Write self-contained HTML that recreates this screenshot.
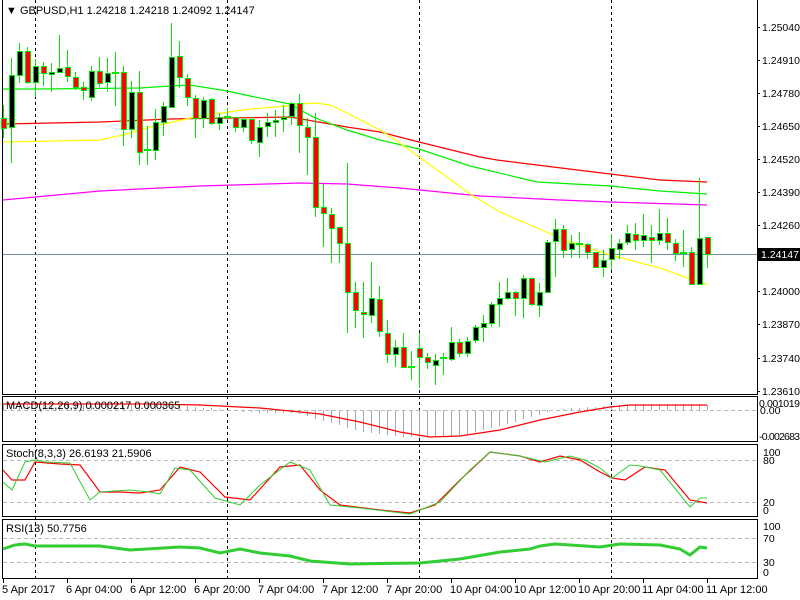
<!DOCTYPE html>
<html><head><meta charset="utf-8"><style>
html,body{margin:0;padding:0;background:#fff;width:800px;height:600px;overflow:hidden}
svg{display:block}
text{font-family:"Liberation Sans","DejaVu Sans",sans-serif;font-size:11px;fill:#000}
.ax text{font-size:10.5px}
</style></head><body>
<svg width="800" height="600" viewBox="0 0 800 600" xmlns="http://www.w3.org/2000/svg">
<rect width="800" height="600" fill="#fff"/>
<g fill="none" stroke="#000" stroke-width="1">
<rect x="2.5" y="-1" width="755" height="395.5"/>
<rect x="2.5" y="396.5" width="755" height="45"/>
<rect x="2.5" y="444.5" width="755" height="72"/>
<rect x="2.5" y="519.5" width="755" height="59"/>
</g>
<g stroke="#000" stroke-dasharray="3,3" stroke-width="1">
<line x1="35.5" y1="0" x2="35.5" y2="578"/>
<line x1="227.5" y1="0" x2="227.5" y2="578"/>
<line x1="419.5" y1="0" x2="419.5" y2="578"/>
<line x1="611.5" y1="0" x2="611.5" y2="578"/>
</g>
<g stroke="#b8b8b8" stroke-dasharray="4,3">
<line x1="3" y1="410.5" x2="757" y2="410.5"/>
<line x1="3" y1="460.5" x2="757" y2="460.5"/>
<line x1="3" y1="502.5" x2="757" y2="502.5"/>
<line x1="3" y1="538.5" x2="757" y2="538.5"/>
<line x1="3" y1="562.5" x2="757" y2="562.5"/>
</g>
<line x1="3" y1="254.5" x2="757" y2="254.5" stroke="#778899"/>
<g fill="none" stroke-width="1.2">
<polyline stroke="#ff00ff" points="3,200 100,191 200,186 300,183 347,184 400,188 480,196 560,200 610,202 707,205"/>
<polyline stroke="#ff0000" points="3,124 100,122 170,119 230,118 290,117 347,127 380,132 419,142 480,157 497,160 537,165 610,174 660,180 707,182"/>
<polyline stroke="#00ee00" points="3,89 40,89 140,88 170,86 190,85 227,91 250,96 290,104 313,117 347,130 380,140 419,149 470,166 537,182 610,186 660,191 707,194"/>
<polyline stroke="#ffff00" points="3,142 100,140 123,135 150,127 200,116 250,109 287,106 300,104 315,103 330,105 347,113 380,130 400,143 419,157 447,177 470,194 500,212 537,228 570,242 610,255 660,268 707,285"/>
</g>
<g stroke="#00e600" stroke-width="1">
<path d="M3.5 105V138M11.5 58V163M19.5 43V83M27.5 47V84M35.5 59V97M43.5 62V86M51.5 63V92M59.5 35V73M67.5 50V82M75.5 72V90M83.5 82V100M91.5 66V101M99.5 57V87M107.5 58V92M115.5 52V106M123.5 66V146M131.5 81V138M139.5 71V165M147.5 126V165M155.5 109V160M163.5 102V136M171.5 23V108M179.5 41V88M187.5 74V106M195.5 95V138M203.5 97V128M211.5 98V125M219.5 113V130M227.5 108V120M235.5 117V132M243.5 117V132M251.5 117V144M259.5 120V157M267.5 113V137M275.5 110V137M283.5 105V132M291.5 102V125M299.5 94V153M307.5 118V175M315.5 113V217M323.5 184V247M331.5 208V263M339.5 227V263M347.5 163V333M355.5 282V328M363.5 282V338M371.5 262V323M379.5 286V337M387.5 320V363M395.5 340V367M403.5 333V368M411.5 351V380M419.5 333V388M427.5 353V369M435.5 354V385M443.5 353V375M451.5 327V361M459.5 339V357M467.5 337V357M475.5 325V343M483.5 315V342M491.5 302V327M499.5 282V327M507.5 278V300M515.5 291V316M523.5 275V318M531.5 278V306M539.5 283V317M547.5 240V293M555.5 219V277M563.5 225V258M571.5 235V258M579.5 232V258M587.5 243V259M595.5 252V268M603.5 250V277M611.5 234V270M619.5 239V259M627.5 225V245M635.5 223V250M643.5 214V247M651.5 225V263M659.5 209V245M667.5 218V250M675.5 239V261M683.5 230V267M691.5 247V284M699.5 178V284M707.5 237V268"/>
<g fill="#ff0000">
<rect x="1.5" y="118.5" width="5" height="10"/><rect x="25.5" y="51.5" width="5" height="31"/><rect x="41.5" y="66.5" width="5" height="7"/><rect x="65.5" y="67.5" width="5" height="9"/><rect x="73.5" y="77.5" width="5" height="10"/><rect x="81.5" y="87.5" width="5" height="3"/><rect x="97.5" y="71.5" width="5" height="12"/><rect x="121.5" y="72.5" width="5" height="57"/><rect x="137.5" y="92.5" width="5" height="60"/><rect x="177.5" y="56.5" width="5" height="21"/><rect x="185.5" y="78.5" width="5" height="19"/><rect x="193.5" y="98.5" width="5" height="20"/><rect x="209.5" y="99.5" width="5" height="24"/><rect x="233.5" y="117.5" width="5" height="10"/><rect x="249.5" y="119.5" width="5" height="21"/><rect x="297.5" y="103.5" width="5" height="22"/><rect x="305.5" y="127.5" width="5" height="10"/><rect x="313.5" y="137.5" width="5" height="70"/><rect x="321.5" y="207.5" width="5" height="6"/><rect x="329.5" y="214.5" width="5" height="14"/><rect x="337.5" y="227.5" width="5" height="16"/><rect x="345.5" y="243.5" width="5" height="49"/><rect x="353.5" y="292.5" width="5" height="18"/><rect x="361.5" y="312.5" width="5" height="2"/><rect x="377.5" y="299.5" width="5" height="32"/><rect x="385.5" y="333.5" width="5" height="21"/><rect x="401.5" y="347.5" width="5" height="20"/><rect x="417.5" y="348.5" width="5" height="9"/><rect x="425.5" y="357.5" width="5" height="5"/><rect x="457.5" y="342.5" width="5" height="11"/><rect x="513.5" y="292.5" width="5" height="6"/><rect x="529.5" y="278.5" width="5" height="26"/><rect x="561.5" y="229.5" width="5" height="21"/><rect x="585.5" y="244.5" width="5" height="8"/><rect x="593.5" y="252.5" width="5" height="15"/><rect x="633.5" y="234.5" width="5" height="6"/><rect x="649.5" y="237.5" width="5" height="3"/><rect x="665.5" y="233.5" width="5" height="9"/><rect x="673.5" y="243.5" width="5" height="10"/><rect x="689.5" y="252.5" width="5" height="32"/><rect x="705.5" y="237.5" width="5" height="17"/>
</g>
<g fill="#000">
<rect x="9.5" y="75.5" width="5" height="52"/><rect x="17.5" y="51.5" width="5" height="24"/><rect x="33.5" y="66.5" width="5" height="16"/><rect x="49.5" y="72.5" width="5" height="2"/><rect x="57.5" y="68.5" width="5" height="4"/><rect x="89.5" y="71.5" width="5" height="26"/><rect x="105.5" y="73.5" width="5" height="9"/><rect x="129.5" y="92.5" width="5" height="37"/><rect x="153.5" y="122.5" width="5" height="28"/><rect x="161.5" y="106.5" width="5" height="16"/><rect x="169.5" y="57.5" width="5" height="50"/><rect x="201.5" y="100.5" width="5" height="18"/><rect x="217.5" y="117.5" width="5" height="6"/><rect x="241.5" y="119.5" width="5" height="8"/><rect x="257.5" y="127.5" width="5" height="15"/><rect x="265.5" y="122.5" width="5" height="4"/><rect x="273.5" y="120.5" width="5" height="2"/><rect x="281.5" y="117.5" width="5" height="2"/><rect x="289.5" y="103.5" width="5" height="13"/><rect x="369.5" y="298.5" width="5" height="17"/><rect x="393.5" y="347.5" width="5" height="7"/><rect x="433.5" y="360.5" width="5" height="5"/><rect x="449.5" y="342.5" width="5" height="17"/><rect x="465.5" y="341.5" width="5" height="12"/><rect x="473.5" y="327.5" width="5" height="13"/><rect x="481.5" y="323.5" width="5" height="4"/><rect x="489.5" y="304.5" width="5" height="19"/><rect x="497.5" y="298.5" width="5" height="6"/><rect x="505.5" y="292.5" width="5" height="6"/><rect x="521.5" y="278.5" width="5" height="20"/><rect x="537.5" y="292.5" width="5" height="13"/><rect x="545.5" y="242.5" width="5" height="50"/><rect x="553.5" y="229.5" width="5" height="12"/><rect x="569.5" y="243.5" width="5" height="6"/><rect x="601.5" y="260.5" width="5" height="7"/><rect x="609.5" y="248.5" width="5" height="11"/><rect x="617.5" y="243.5" width="5" height="6"/><rect x="625.5" y="233.5" width="5" height="9"/><rect x="641.5" y="235.5" width="5" height="5"/><rect x="657.5" y="233.5" width="5" height="7"/><rect x="697.5" y="238.5" width="5" height="46"/>
</g>
<path stroke-width="2" d="M112 73H119M144 150H151M224 117H231M408 367H415M440 358H447M576 244H583M680 253H687"/>
</g>
<path stroke="#a8a8a8" stroke-width="1" d="M3.5 410V405M11.5 410V405M19.5 410V405M27.5 410V405M35.5 410V405M43.5 410V405M51.5 410V405M59.5 410V405M67.5 410V405M75.5 410V405M83.5 410V405M91.5 410V405M99.5 410V405M107.5 410V405M115.5 410V405M123.5 410V405M131.5 410V405M139.5 410V405M147.5 410V405M155.5 410V405M163.5 410V405M171.5 410V405M179.5 410V405M187.5 410V406M195.5 410V407M203.5 410V408M211.5 410V408M219.5 410V409M235.5 410V411M243.5 410V412M251.5 410V412M259.5 410V413M267.5 410V413M275.5 410V413M283.5 410V413M291.5 410V413M299.5 410V414M307.5 410V416M315.5 410V419M323.5 410V421M331.5 410V423M339.5 410V425M347.5 410V428M355.5 410V430M363.5 410V432M371.5 410V433M379.5 410V434M387.5 410V435M395.5 410V436M403.5 410V437M411.5 410V437M419.5 410V437M427.5 410V437M435.5 410V437M443.5 410V437M451.5 410V436M459.5 410V435M467.5 410V434M475.5 410V432M483.5 410V430M491.5 410V428M499.5 410V426M507.5 410V424M515.5 410V422M523.5 410V419M531.5 410V417M539.5 410V415M547.5 410V412M563.5 410V409M571.5 410V408M579.5 410V408M587.5 410V407M595.5 410V407M603.5 410V406M611.5 410V406M619.5 410V405M627.5 410V405M635.5 410V405M643.5 410V405M651.5 410V405M659.5 410V405M667.5 410V405M675.5 410V405M683.5 410V405M691.5 410V405M699.5 410V405M707.5 410V405"/>
<polyline fill="none" stroke="#ff0000" stroke-width="1.2" points="3,404 150,404 200,405 260,408 320,414 360,422 400,432 430,437 460,436 500,430 540,420 580,412 610,407 630,405 707,405"/>
<polyline fill="none" stroke="#ff0000" stroke-width="1.2" points="3,470 12,480 25,480 35,462 60,464 80,465 100,492 120,492 140,493 160,490 180,467 200,472 225,497 250,500 280,467 300,465 320,490 340,505 380,510 410,513 435,505 460,480 490,452 520,456 540,462 560,456 580,460 600,472 612,478 625,480 645,467 665,470 690,500 707,503"/>
<polyline fill="none" stroke="#32cd32" stroke-width="1" points="3,482 12,490 25,462 35,460 45,462 70,463 90,500 100,492 130,490 150,492 160,494 175,468 190,470 215,498 240,505 260,485 290,462 310,470 330,505 360,508 410,514 425,508 440,502 470,470 490,452 520,456 545,462 570,456 585,460 600,468 612,478 630,465 640,466 660,470 690,507 700,498 707,498"/>
<polyline fill="none" stroke="#32cd32" stroke-width="3" points="3,549 15,545 25,544 35,546 100,546 130,550 180,547 200,548 220,553 240,549 260,553 290,556 310,561 350,564 420,563 460,559 500,552 530,549 540,546 555,544 600,547 620,544 660,545 680,549 690,555 700,547 707,548"/>
<text x="6" y="14">▼ GBPUSD,H1  1.24218 1.24218 1.24092 1.24147</text>
<text x="6" y="409">MACD(12,26,9) 0.000217 0.000365</text>
<text x="6" y="457">Stoch(8,3,3) 26.6193 21.5906</text>
<text x="6" y="532">RSI(13) 50.7756</text>
<g stroke="#000"><path d="M757 27.5h3M757 60.5h3M757 93.5h3M757 126.5h3M757 159.5h3M757 192.5h3M757 225.5h3M757 291.5h3M757 324.5h3M757 358.5h3M757 391.5h3"/></g>
<g class="ax">
<text x="762" y="31">1.25040</text><text x="762" y="64">1.24910</text><text x="762" y="97">1.24780</text><text x="762" y="130">1.24650</text><text x="762" y="163">1.24520</text><text x="762" y="196">1.24390</text><text x="762" y="229">1.24260</text>
<rect x="758" y="248" width="42" height="13" fill="#000"/>
<text x="761" y="258" style="fill:#fff">1.24147</text>
<text x="762" y="295">1.24000</text><text x="762" y="328">1.23870</text><text x="762" y="362">1.23740</text><text x="762" y="395">1.23610</text>
<text x="759" y="407" textLength="41">0.001019</text><text x="760" y="414">0.00</text><text x="759" y="440" textLength="41">-0.002683</text>
<text x="763" y="456">100</text><text x="763" y="464">80</text><text x="763" y="506">20</text><text x="763" y="514">0</text>
<text x="763" y="530">100</text><text x="763" y="542">70</text><text x="763" y="566">30</text><text x="763" y="576">0</text>
</g>
<g stroke="#000"><path d="M3.5 578v5M67.5 578v5M131.5 578v5M195.5 578v5M259.5 578v5M323.5 578v5M387.5 578v5M451.5 578v5M515.5 578v5M579.5 578v5M643.5 578v5M707.5 578v5"/></g>
<g>
<text x="2" y="593">5 Apr 2017</text><text x="66" y="593">6 Apr 04:00</text><text x="130" y="593">6 Apr 12:00</text><text x="194" y="593">6 Apr 20:00</text><text x="258" y="593">7 Apr 04:00</text><text x="322" y="593">7 Apr 12:00</text><text x="386" y="593">7 Apr 20:00</text><text x="450" y="593">10 Apr 04:00</text><text x="514" y="593">10 Apr 12:00</text><text x="578" y="593">10 Apr 20:00</text><text x="642" y="593">11 Apr 04:00</text><text x="706" y="593">11 Apr 12:00</text>
</g>
</svg>
</body></html>
